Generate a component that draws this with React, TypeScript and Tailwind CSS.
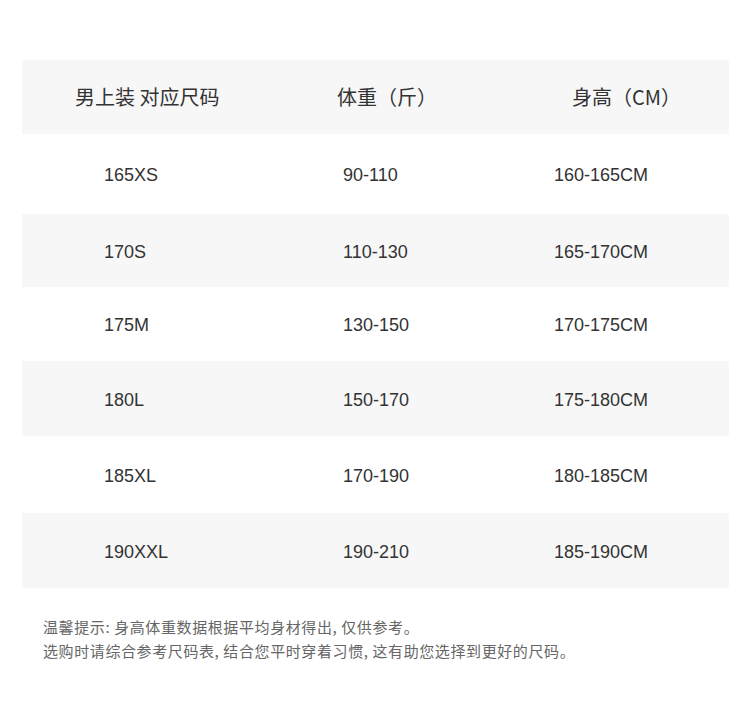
const rows = [
  { h: "h-[80px]", cells: ["165XS", "90-110", "160-165CM"] },
  { h: "h-[73px]", cells: ["170S", "110-130", "165-170CM"] },
  { h: "h-[74px]", cells: ["175M", "130-150", "170-175CM"] },
  { h: "h-[75px]", cells: ["180L", "150-170", "175-180CM"] },
  { h: "h-[77px]", cells: ["185XL", "170-190", "180-185CM"] },
  { h: "h-[75px]", cells: ["190XXL", "190-210", "185-190CM"] },
];

export default function App() {
  return (
    <div className="w-[750px] h-[709px] bg-white pt-[60px] font-['Liberation_Sans','Noto_Sans_CJK_SC',sans-serif] text-[#333]">
      <div className="ml-[22px] w-[707px]">
        <div className="grid grid-cols-[239px_211px_257px] h-[74px] items-center bg-[#f7f7f7] text-[20px] font-['Noto_Sans_CJK_SC',sans-serif]">
          <div className="pl-[53px]">男上装 对应尺码</div>
          <div className="pl-[76px]">体重（斤）</div>
          <div className="pl-[100px]">身高（CM）</div>
        </div>
        {rows.map((r, i) => (
          <div
            key={r.cells[0]}
            className={`grid grid-cols-[239px_211px_257px] ${r.h} items-center text-[18px] pt-[3px] ${i % 2 === 1 ? "bg-[#f7f7f7]" : "bg-white"}`}
          >
            <div className="pl-[82px]">{r.cells[0]}</div>
            <div className="pl-[82px]">{r.cells[1]}</div>
            <div className="pl-[82px]">{r.cells[2]}</div>
          </div>
        ))}
      </div>
      <div className="mt-[27px] ml-[43px] text-[15px] leading-[24px] tracking-[0.6px] text-[#666] font-['Noto_Sans_CJK_SC',sans-serif]">
        <p>温馨提示: 身高体重数据根据平均身材得出, 仅供参考。</p>
        <p>选购时请综合参考尺码表, 结合您平时穿着习惯, 这有助您选择到更好的尺码。</p>
      </div>
    </div>
  );
}
